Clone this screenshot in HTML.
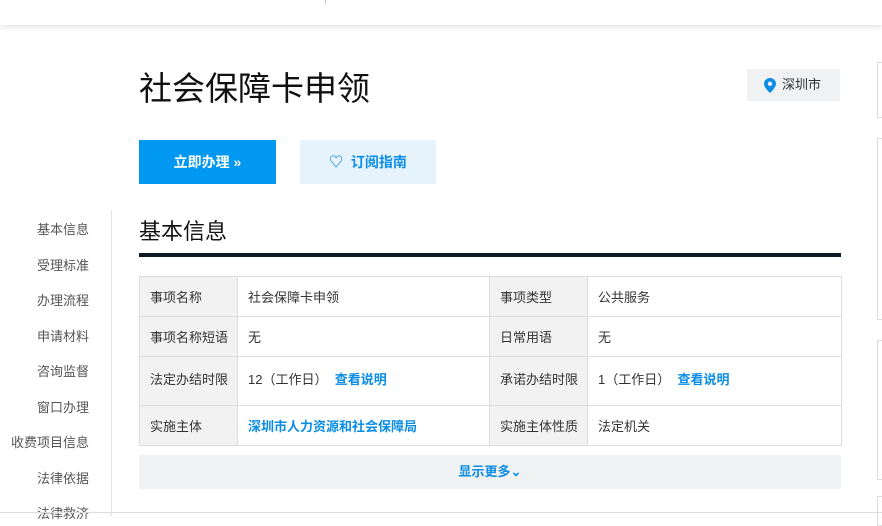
<!DOCTYPE html>
<html><head><meta charset="utf-8"><style>
*{margin:0;padding:0;box-sizing:border-box}
body{width:882px;height:516px;overflow:hidden;background:#fff;font-family:"Liberation Sans","Noto Sans CJK SC",sans-serif;position:relative;color:#333}
.hdr{position:absolute;left:0;top:0;width:882px;height:25px;background:#fff;box-shadow:0 2px 6px rgba(0,0,0,.12)}
.abs{position:absolute}
.side{position:absolute;right:793px;font-size:13px;color:#555;white-space:nowrap;text-align:right}
table{position:absolute;left:139px;top:276px;width:702px;border-collapse:collapse;font-size:13px;color:#333;table-layout:fixed}
td{border:1px solid #ddd;padding:0 0 0 10px;vertical-align:middle;white-space:nowrap;overflow:hidden}
td.l{background:#f2f2f2}
a{color:#0a8de6;font-weight:bold;text-decoration:none}
.rb{position:absolute;left:877px;width:10px;border:1px solid #ddd;border-right:none}
</style></head><body>
<div class="hdr"><div class="abs" style="left:325px;top:0;width:1px;height:5px;background:#ccc"></div></div>
<div class="rb" style="top:62px;height:56px"></div>
<div class="rb" style="top:138px;height:182px"></div>
<div class="rb" style="top:340px;height:140px"></div>
<div class="rb" style="top:496px;height:30px"></div>
<div class="abs" style="left:139px;top:67px;font-size:33px;color:#111;line-height:44px">社会保障卡申领</div>
<div class="abs" style="left:747px;top:69px;width:93px;height:32px;background:#f0f1f2;font-size:13px;color:#333;line-height:32px;padding-left:17px">
<svg style="position:absolute;left:17px;top:9px" width="12" height="15" viewBox="0 0 12 15"><path d="M6 0C2.7 0 0 2.6 0 5.8 0 9.8 6 15 6 15s6-5.2 6-9.2C12 2.6 9.3 0 6 0z" fill="#0a8de6"/><circle cx="6" cy="5.8" r="2.2" fill="#f0f1f2"/></svg>
<span style="margin-left:18px">深圳市</span></div>
<div class="abs" style="left:139px;top:140px;width:137px;height:44px;background:#0098f0;color:#fff;font-size:14px;font-weight:bold;line-height:44px;text-align:center">立即办理 »</div>
<div class="abs" style="left:300px;top:140px;width:136px;height:44px;background:#e6f3fc;color:#0a8de6;font-size:14px;font-weight:bold;line-height:44px;text-align:center">♡&nbsp; 订阅指南</div>
<div class="abs" style="left:111px;top:210px;width:1px;height:306px;background:#e5e5e5"></div>
<div class="side" style="top:219px">基本信息</div>
<div class="side" style="top:255px">受理标准</div>
<div class="side" style="top:290px">办理流程</div>
<div class="side" style="top:326px">申请材料</div>
<div class="side" style="top:361px">咨询监督</div>
<div class="side" style="top:397px">窗口办理</div>
<div class="side" style="top:432px">收费项目信息</div>
<div class="side" style="top:468px">法律依据</div>
<div class="side" style="top:503px">法律救济</div>
<div class="abs" style="left:139px;top:217px;font-size:22px;color:#111;line-height:30px">基本信息</div>
<div class="abs" style="left:139px;top:253px;width:702px;height:4px;background:#0d1a26"></div>
<table>
<colgroup><col style="width:98px"><col style="width:252px"><col style="width:98px"><col style="width:254px"></colgroup>
<tr style="height:40px"><td class="l">事项名称</td><td>社会保障卡申领</td><td class="l">事项类型</td><td>公共服务</td></tr>
<tr style="height:40px"><td class="l">事项名称短语</td><td>无</td><td class="l">日常用语</td><td>无</td></tr>
<tr style="height:49px"><td class="l" style="vertical-align:top;padding-top:12px">法定办结时限</td><td style="vertical-align:top;padding-top:12px">12（工作日）&nbsp; <a>查看说明</a></td><td class="l" style="vertical-align:top;padding-top:12px">承诺办结时限</td><td style="vertical-align:top;padding-top:12px">1（工作日）&nbsp; <a>查看说明</a></td></tr>
<tr style="height:40px"><td class="l">实施主体</td><td><a>深圳市人力资源和社会保障局</a></td><td class="l">实施主体性质</td><td>法定机关</td></tr>
</table>
<div class="abs" style="left:139px;top:455px;width:702px;height:34px;background:#f0f1f2;text-align:center;line-height:34px;font-size:13px"><a>显示更多⌄</a></div>
<div class="abs" style="left:0;top:512px;width:882px;height:1px;background:#ddd"></div>
</body></html>
